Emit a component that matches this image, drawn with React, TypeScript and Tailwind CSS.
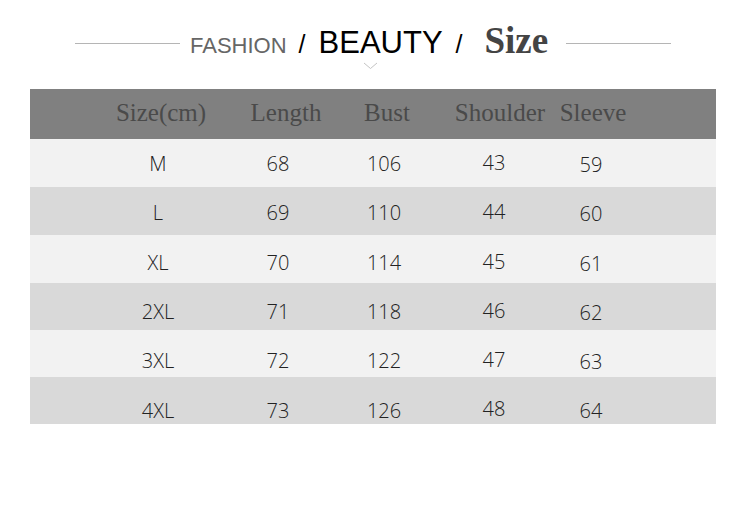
const rows = [
  ['M', '68', '106', '43', '59'],
  ['L', '69', '110', '44', '60'],
  ['XL', '70', '114', '45', '61'],
  ['2XL', '71', '118', '46', '62'],
  ['3XL', '72', '122', '47', '63'],
  ['4XL', '73', '126', '48', '64'],
]

// text drifts lower row by row in the original picture
const shift = ['pt-[2px]', 'pt-[4px]', 'pt-[8px]', 'pt-[11px]', 'pt-[15px]', 'pt-[18px]']

const heads = ['Size(cm)', 'Length', 'Bust', 'Shoulder', 'Sleeve']

const sans = "font-['Liberation_Sans',Arial,sans-serif]"
const serif = "font-['Liberation_Serif','Times_New_Roman',serif]"

function Title() {
  return (
    <div className="pt-[18px]">
      <div className="flex items-center h-[44px] pl-[75px]">
        <div className="w-[105px] h-px bg-[#b5b5b5] mt-[7px]" />
        <div className="flex items-baseline ml-[10px]">
          <span className={`${sans} text-[22px] text-[#666666] leading-none`}>FASHION</span>
          <span className={`${sans} text-[25px] text-black leading-none ml-[12px]`}>/</span>
          <span className={`${sans} text-[31px] text-black leading-none ml-[13px]`}>BEAUTY</span>
          <span className={`${sans} text-[25px] text-black leading-none ml-[13px]`}>/</span>
          <span className={`${serif} text-[37px] font-bold text-[#444444] leading-none ml-[22px]`}>Size</span>
        </div>
        <div className="w-[105px] h-px bg-[#b5b5b5] ml-[18px] mt-[7px]" />
      </div>
      <div className="pl-[363px] h-[27px]">
        <svg width="15" height="8" viewBox="0 0 15 8" className="block">
          <path d="M1 1 L7.5 6.5 L14 1" fill="none" stroke="#c4c4c4" strokeWidth="1" />
        </svg>
      </div>
    </div>
  )
}

function SizeTable() {
  return (
    <div className="ml-[30px] w-[686px]">
      <div className="grid grid-cols-[71px_120px_130px_72px_154px_32px] h-[50px] items-center bg-[#808080]">
        <div />
        {heads.map((h) => (
          <div key={h} className={`flex justify-center whitespace-nowrap ${serif} text-[25px] text-[#4a4a4a] -mt-[3px]`}>
            {h}
          </div>
        ))}
      </div>
      {rows.map((r, i) => (
        <div
          key={r[0]}
          className={`grid grid-cols-[68px_120px_120px_92px_128px_66px] items-center ${shift[i]} ${
            i < 3 ? 'h-[48px]' : 'h-[47px]'
          } ${i % 2 === 0 ? 'bg-[#f2f2f2]' : 'bg-[#d9d9d9]'}`}
        >
          <div />
          {r.map((c, j) => (
            <div
              key={j}
              className={`flex justify-center whitespace-nowrap font-['Open_Sans',sans-serif] font-light text-[20px] text-[#222222] ${
                j === 3 ? '-mt-[3px]' : j === 4 ? 'mt-[1px]' : ''
              }`}
            >
              {c}
            </div>
          ))}
        </div>
      ))}
    </div>
  )
}

export default function App() {
  return (
    <div className="w-[750px] h-[507px] bg-white overflow-hidden">
      <Title />
      <SizeTable />
    </div>
  )
}
